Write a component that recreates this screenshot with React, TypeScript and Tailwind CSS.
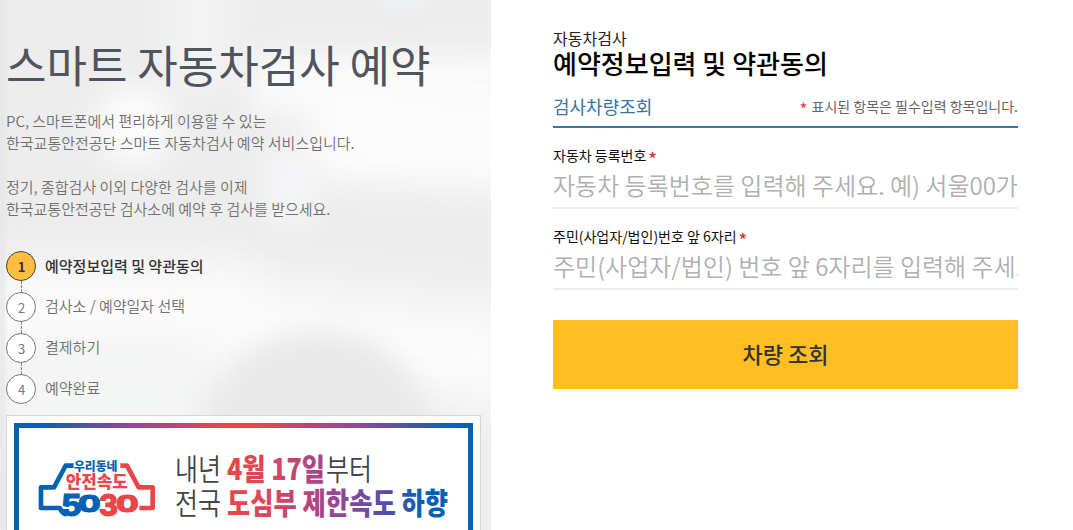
import clsx from "clsx";

const steps = [
	{ num: 1, label: "예약정보입력 및 약관동의", isActive: true },
	{ num: 2, label: "검사소 / 예약일자 선택", isActive: false },
	{ num: 3, label: "결제하기", isActive: false },
	{ num: 4, label: "예약완료", isActive: false },
];

function Backdrop() {
	return (
		<div className="absolute inset-0 overflow-hidden bg-[#ededed]">
			<div className="absolute -top-10 left-[170px] h-[130px] w-[60px] bg-[#f3f3f3] blur-lg" />
			<div className="absolute -top-8 left-[380px] h-11 w-12 rounded-full bg-[#eff1f6] blur-sm" />
			<div className="absolute top-[86px] left-[95px] h-[78px] w-[80px] rounded-full bg-[#fcfcfc] blur-lg" />
			<div className="absolute top-[55px] left-[250px] h-[60px] w-[290px] bg-[#fafafa] blur-lg" />
			<div className="absolute top-[90px] left-[310px] h-[95px] w-[240px] rotate-3 bg-[#fcfcfc] blur-lg" />
			<div className="absolute top-[145px] left-[267px] h-[80px] w-[45px] bg-[#f5f6f8] blur-lg" />
			<div className="absolute top-[265px] -left-4 h-[95px] w-[270px] bg-[#fbfbfb] blur-xl" />
			<div className="absolute top-[295px] left-[200px] h-[100px] w-[340px] rotate-6 bg-[#fbfbfb] blur-xl" />
			<div className="absolute top-[350px] -left-4 h-[110px] w-[230px] bg-[#f4f5f5] blur-xl" />
			<div className="absolute top-[332px] left-[205px] h-[210px] w-[225px] rounded-full bg-[#e9e9e9] blur-md" />
			<div className="absolute inset-y-0 left-0 w-1 bg-[#e4e4e4] blur-[2px]" />
		</div>
	);
}

function SpeedLogo() {
	return (
		<svg viewBox="0 0 405 240" className="h-20 w-[135px] shrink-0" fontWeight="900">
			<g fill="none" strokeWidth="14" strokeLinejoin="round">
				<path d="M131 47H107L72 112H33V174H90Q96 192 110 193" stroke="#0561b2" />
				<path d="M271 47H291L326 112H368V174H328" stroke="#ea4648" />
			</g>
			<text x="132" y="62" fontSize="37" textLength="130" lengthAdjust="spacingAndGlyphs" fill="#0561b2">
				우리동네
			</text>
			<text x="107" y="113" fontSize="52" textLength="186" lengthAdjust="spacingAndGlyphs" fill="#ea4648">
				안전속도
			</text>
			<g fontFamily="Inter" fontWeight="800" strokeWidth="3">
				<text x="93" y="198" fontSize="88" textLength="62" lengthAdjust="spacingAndGlyphs" fill="#0561b2" stroke="#0561b2">
					5
				</text>
				<text x="144" y="185" fontSize="70" textLength="68" lengthAdjust="spacingAndGlyphs" fill="#0561b2" stroke="#0561b2">
					0
				</text>
				<text x="206" y="198" fontSize="88" textLength="58" lengthAdjust="spacingAndGlyphs" fill="#ea4648" stroke="#ea4648">
					3
				</text>
				<text x="258" y="185" fontSize="70" textLength="68" lengthAdjust="spacingAndGlyphs" fill="#ea4648" stroke="#ea4648">
					0
				</text>
			</g>
		</svg>
	);
}

function Slogan() {
	return (
		<svg viewBox="0 0 280 80" className="h-20 w-[280px]" fontSize="30">
			<defs>
				<linearGradient id="sloganColor" gradientUnits="userSpaceOnUse" x1="52" y1="0" x2="274" y2="0">
					<stop offset="0" stopColor="#ea4648" />
					<stop offset="0.2" stopColor="#d64761" />
					<stop offset="0.5" stopColor="#96459a" />
					<stop offset="0.7" stopColor="#584caa" />
					<stop offset="0.88" stopColor="#0561b2" />
				</linearGradient>
			</defs>
			<g fill="#444" className="font-[350]">
				<text x="-1" y="30" textLength="46" lengthAdjust="spacingAndGlyphs">내년</text>
				<text x="150" y="30" textLength="46" lengthAdjust="spacingAndGlyphs">부터</text>
				<text x="-1" y="64" textLength="46" lengthAdjust="spacingAndGlyphs">전국</text>
			</g>
			<g fill="url(#sloganColor)" fontWeight="900">
				<text x="51" y="30" textLength="98" lengthAdjust="spacingAndGlyphs">4월 17일</text>
				<text x="51" y="64" textLength="221" lengthAdjust="spacingAndGlyphs">도심부 제한속도 하향</text>
			</g>
		</svg>
	);
}

function Banner() {
	return (
		<div className="ml-1.5 h-[140px] w-[475px] shrink-0 border border-[#d6d6d6] bg-white px-[7px] pt-[7px]">
			<div className="h-full bg-[linear-gradient(90deg,#0561b2_0%,#0561b2_5%,#96459a_26%,#ea4648_46%,#ea4648_52%,#96459a_74%,#0561b2_97%)] pt-[5px]">
				<div className="flex h-full border-x-[5px] border-[#0561b2] bg-white pt-[22px] pl-[11px]">
					<SpeedLogo />
					<div className="ml-[11px]">
						<Slogan />
					</div>
				</div>
			</div>
		</div>
	);
}

function Intro() {
	return (
		<section className="relative h-[530px] w-[491px] shrink-0 overflow-hidden">
			<Backdrop />
			<div className="relative flex flex-col">
				<h1 className="mt-9 ml-1.5 text-[44px] leading-[56px] text-[#50545e]">스마트 자동차검사 예약</h1>
				<p className="mt-[18px] ml-1.5 text-[15px] leading-[22px] font-[350] text-[#707070]">
					PC, 스마트폰에서 편리하게 이용할 수 있는
					<br />
					한국교통안전공단 스마트 자동차검사 예약 서비스입니다.
					<br />
					<br />
					정기, 종합검사 이외 다양한 검사를 이제
					<br />
					한국교통안전공단 검사소에 예약 후 검사를 받으세요.
				</p>
				<ol className="mt-[31px] mb-[11px] ml-1.5 flex flex-col">
					{steps.map((step, idx) => {
						return (
							<li key={step.num}>
								{idx > 0 && <div className="ml-[15px] h-[11px] w-px border-l border-dashed border-[#888]" />}
								<div className="flex h-[30px] gap-[9px]">
									<span
										className={clsx(
											"flex size-[30px] items-center justify-center rounded-full border pt-px pl-px text-[13px]",
											step.isActive
												? "border-[#444] bg-[#ffbe42] font-bold text-[#333]"
												: "border-[#777] bg-white text-[#777]"
										)}
									>
										{step.num}
									</span>
									<span
										className={clsx(
											"text-[15px]",
											step.isActive
												? "leading-[30px] font-medium text-[#333]"
												: "leading-[28px] font-[350] text-[#707070]"
										)}
									>
										{step.label}
									</span>
								</div>
							</li>
						);
					})}
				</ol>
				<Banner />
			</div>
		</section>
	);
}

function Field({ label, placeholder }: { label: string; placeholder: string }) {
	return (
		<label className="block h-[81px]">
			<span className="flex h-5 gap-[2px] text-[14px] leading-5 text-[#111]">
				{label}
				<span className="text-[18px] leading-[26px] font-medium text-[#e03030]">*</span>
			</span>
			<input
				type="text"
				placeholder={placeholder}
				className="block h-[44px] w-full border-b-2 border-[#e9edf0] pb-1 text-[24px] font-[350] placeholder:text-[#b0b0b0] focus:outline-none"
			/>
		</label>
	);
}

export default function App() {
	return (
		<main className="flex h-[530px] w-[1073px] overflow-hidden bg-white font-['Noto_Sans_CJK_KR',sans-serif]">
			<Intro />
			<section className="ml-[62px] w-[465px]">
				<p className="mt-[27px] text-[16px] leading-[22px] text-[#222]">자동차검사</p>
				<h2 className="text-[26px] leading-7 font-medium text-black">예약정보입력 및 약관동의</h2>
				<div className="mt-[11px] flex h-10 justify-between border-b-2 border-[#3675a9]">
					<h3 className="text-[18px] leading-9 text-[#3675a9]">검사차량조회</h3>
					<p className="flex gap-1 text-[14px] leading-9 text-[#666]">
						<span className="text-[17px] leading-[42px] text-[#e8394a]">*</span>
						표시된 항목은 필수입력 항목입니다.
					</p>
				</div>
				<form className="mt-[17px]">
					<Field label="자동차 등록번호" placeholder="자동차 등록번호를 입력해 주세요. 예) 서울00가" />
					<Field
						label="주민(사업자/법인)번호 앞 6자리"
						placeholder="주민(사업자/법인) 번호 앞 6자리를 입력해 주세요."
					/>
					<button
						type="button"
						className="mt-[13px] h-[69px] w-full bg-[#ffbe22] pb-[3px] text-[22px] font-medium text-[#333]"
					>
						차량 조회
					</button>
				</form>
			</section>
		</main>
	);
}
